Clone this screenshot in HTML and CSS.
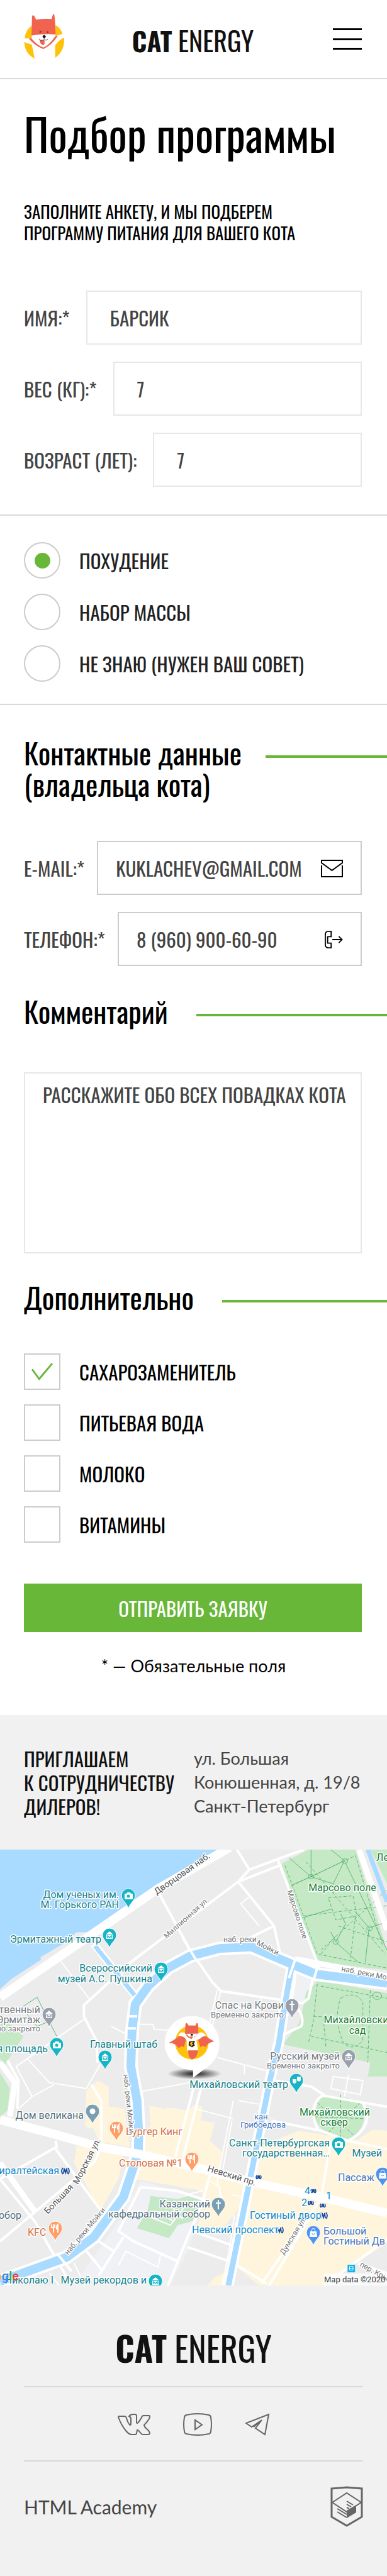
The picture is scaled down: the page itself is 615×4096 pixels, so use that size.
FILE: index.html
```html
<!DOCTYPE html>
<html lang="ru">
<head>
<meta charset="utf-8">
<meta name="viewport" content="width=device-width, initial-scale=1">
<title>Cat Energy — Подбор программы</title>
<link rel="stylesheet" href="styles.css">
</head>
<body>
<header class="header">
  <a class="header-logo" href="#" aria-label="Cat Energy">
    <svg class="cat" viewBox="28 18 206 230" aria-hidden="true">
      <path fill="#ffc20a" d="M68 80Q36 100 32 145L68 143ZM187 77Q214 93 222 122L187 132ZM30 163L68 176 82 246Q32 220 30 163ZM230 140Q236 205 186 242L185 180Q206 151 230 140Z"/>
      <path fill="#f0634f" d="M66 130L69 32Q77 18 89 50Q128 44 168 47Q172 23 179 20Q184 26 188 124Q126 120 66 130Z"/>
      <path fill="#f0634f" d="M53 145L65 143Q94 178 126 191Q160 174 186 133L199 131Q168 180 126 198Q80 180 53 145Z"/>
      <path fill="#f0634f" d="M107 152Q120 156 131 152Q136 178 123 178Q108 172 107 152Z"/>
      <ellipse cx="130" cy="135" rx="8" ry="6.500" fill="#111"/>
      <path fill="none" stroke="#222" stroke-width="2.500" d="M130 141V148M104 147Q112 160 130 150Q144 158 147 147M106 107L116 111 107 115M151 108L144 112 151 115"/>
    </svg>
  </a>
  <a class="wordmark" href="#"><b>CAT</b> ENERGY</a>
  <button class="burger" type="button" aria-label="Меню"><span></span><span></span><span></span></button>
</header>

<main>
  <section class="intro">
    <h1>Подбор программы</h1>
    <p>Заполните анкету, и мы подберем<br>программу питания для вашего кота</p>
  </section>

  <form class="form">
    <div class="fields">
      <div class="field"><label for="name">Имя:*</label><input id="name" type="text" value="БАРСИК"></div>
      <div class="field"><label for="weight">Вес (кг):*</label><input id="weight" type="text" value="7"></div>
      <div class="field"><label for="age">Возраст (лет):</label><input id="age" type="text" value="7"></div>
    </div>

    <div class="goals">
      <label class="option"><input type="radio" name="goal" checked>Похудение</label>
      <label class="option"><input type="radio" name="goal">Набор массы</label>
      <label class="option"><input type="radio" name="goal">Не знаю (нужен ваш совет)</label>
    </div>

    <h2 class="title title-contacts"><span>Контактные данные<br>(владельца кота)</span></h2>
    <div class="contacts">
      <div class="field field-mail">
        <label for="mail">E-mail:*</label>
        <div class="control">
          <input id="mail" type="email" value="KUKLACHEV@GMAIL.COM">
          <svg class="control-icon" viewBox="0 0 35 28" aria-hidden="true"><path d="M1 9V27H34V9M1 5V1H34V5L17.500 17Z"/></svg>
        </div>
      </div>
      <div class="field field-phone">
        <label for="phone">Телефон:*</label>
        <div class="control">
          <input id="phone" type="tel" value="8 (960) 900-60-90">
          <svg class="control-icon" viewBox="0 0 31 30" aria-hidden="true"><path d="M11 1H6Q1 1 1 7V23Q1 29 6 29H11V21H5V10H11ZM13 15H29M24 9.500L29.500 15 24 20.500"/></svg>
        </div>
      </div>
    </div>

    <h2 class="title"><label for="comment">Комментарий</label></h2>
    <textarea class="comment" id="comment" placeholder="РАССКАЖИТЕ ОБО ВСЕХ ПОВАДКАХ КОТА"></textarea>

    <h2 class="title title-extra"><span>Дополнительно</span></h2>
    <div class="extras">
      <label class="option"><input type="checkbox" checked>Сахарозаменитель</label>
      <label class="option"><input type="checkbox">Питьевая вода</label>
      <label class="option"><input type="checkbox">Молоко</label>
      <label class="option"><input type="checkbox">Витамины</label>
    </div>

    <button class="submit" type="submit">Отправить заявку</button>
    <p class="note">* — Обязательные поля</p>
  </form>
</main>

<section class="dealers">
  <h2>Приглашаем<br>к сотрудничеству<br>дилеров!</h2>
  <address>ул. Большая<br>Конюшенная, д. 19/8<br>Санкт-Петербург</address>
</section>

<svg class="map" viewBox="0 0 615 693" role="img" aria-label="Карта проезда">
  <defs>
    <radialGradient id="shade"><stop offset="0" stop-color="#000" stop-opacity=".9"/><stop offset="1" stop-color="#000" stop-opacity="0"/></radialGradient>
    <path id="drop" d="M0 0C-2 -9 -11 -13 -11 -21A11 11 0 0 1 11 -21C11 -13 2 -9 0 0Z"/>
    <path id="museum" d="M-6 -22L0 -27 6 -22ZM-5 -21H5V-15H-5Z" fill="#fff"/>
    <path id="museum-m" d="M-3 -16V-20L0 -17 3 -20V-16" fill="none" stroke-width="1.300"/>
    <g id="pin-museum"><use href="#drop" fill="#16b5c6" stroke="#fff"/><use href="#museum"/><use href="#museum-m" stroke="#16b5c6"/></g>
    <g id="pin-grey"><use href="#drop" fill="#9aa0ab" stroke="#fff"/><use href="#museum"/><use href="#museum-m" stroke="#9aa0ab"/></g>
    <g id="pin-photo"><use href="#drop" fill="#16b5c6" stroke="#fff"/><path d="M-6 -24H-3L-2 -26H3L4 -24H7V-15H-6Z" fill="#fff"/><circle cx="0" cy="-20" r="2.500" fill="#16b5c6"/></g>
    <g id="pin-food"><use href="#drop" fill="#ff9e67" stroke="#fff"/><path d="M-3 -14V-27M-6 -27V-22H-1V-27M4 -14V-27Q1 -24 2 -20H4" fill="none" stroke="#fff" stroke-width="1.800"/></g>
    <g id="cross"><path d="M0 -13V-28M-4 -23H4" stroke="#fff" stroke-width="2"/></g>
    <g id="pin-bag"><use href="#drop" fill="#4f93f0" stroke="#fff"/><path d="M-5 -23H5L6 -14H-6Z" fill="#fff"/><path d="M-2.500 -23V-25A2.500 2.500 0 0 1 2.500 -25V-23" fill="none" stroke="#fff"/><path d="M-2 -20A2 2 0 0 0 2 -20" fill="none" stroke="#4f93f0"/></g>
    <g id="metro" fill="none" stroke="#174aa5" stroke-width="1.800"><path d="M-4 -5Q-8 0 -4 5M4 -5Q8 0 4 5M-3 4L-2 -4 0 3 2 -4 3 4"/></g>
    <g id="metro-small" fill="none" stroke="#174aa5" stroke-width="1.500"><path d="M-3 -3Q-5 0 -3 3M3 -3Q5 0 3 3M-2 3L-1 -3 0 2 1 -3 2 3"/></g>
  </defs>
  <rect width="615" height="693" fill="#ececec"/>
  <g transform="scale(.3923 .3193)">
    <g fill="#fef5dc">
      <path d="M395 1150L440 1180V1280L505 1290 525 1480 400 1455 380 1390 345 1380 350 1200Z"/>
      <path d="M605 1275L665 1290 695 1285 760 1300 790 1270 820 1280 815 1350 870 1360 850 1450 900 1505 890 1610 580 1540V1430L610 1370Z"/>
      <path d="M310 1475L500 1525 480 1640 405 1800 300 1560Z"/>
      <path d="M560 1540L850 1620 1000 1670 960 1800 880 1920 800 1900 820 1700 550 1640Z"/>
      <path d="M1030 1670L1568 1820V1960L1430 2070 1310 2171H1050L960 2080Z"/>
      <path d="M1050 1480L1210 1400 1568 1470V1800L1030 1670Z"/>
      <path d="M1510 1395L1568 1400V1480L1440 1450Z"/>
      <path d="M870 2130L920 2100 930 2171H840Z"/>
    </g>
    <path fill="#f0f1f4" d="M570 1650L740 1710 830 1730 760 2000 690 2171H300L480 1850ZM1195 600L1260 650 1240 770 1180 740Z"/>
    <g fill="#c5e8c5">
      <path d="M1140 70L1250 0H1440L1568 500V600L1285 560Z"/>
      <path d="M1500 0H1568V170Z"/>
      <path d="M1290 650L1568 715V1130H1490L1500 1060 1145 970 1215 860 1240 710Z"/>
      <path d="M0 820L95 930 20 1070 0 1040Z"/>
      <path d="M0 1110L40 1190 30 1300 0 1330Z"/>
      <path d="M1290 1240Q1380 1215 1465 1260 1500 1380 1410 1450 1310 1430 1275 1340Z"/>
      <path d="M610 1725L720 1740 780 1720 820 1740 780 1850 720 1870 685 1935 555 1885 600 1790Z"/>
    </g>
    <g class="park">
      <path class="dash" d="M1155 80L1285 520 1568 590M1180 180L1440 30 1550 480M1330 240L1430 230 1445 330 1360 350ZM1230 330L1568 280M1300 500L1568 200M1240 60L1560 520M1360 430L1300 520M1440 330L1420 540M1370 380L1568 460M1285 670L1270 850 1250 960M1300 680L1568 740M1380 740Q1440 700 1470 760V950Q1430 1010 1390 960 1350 840 1380 740M1270 830L1400 840M1500 700L1490 1060M1260 930L1568 1010M1310 840L1320 980M1285 1260L1440 1430M1380 1220V1450M1460 1260L1320 1420M1275 1330L1480 1340"/>
      <path d="M1170 40L1260 135 1395 55 1568 500M1260 135V0M1260 135L1185 175M1260 135L1350 170 1350 220M1395 55L1340 0M1395 55L1350 170M1225 340L1345 295M1360 460L1400 370 1380 320M1360 460L1340 410M1360 460L1450 560M1495 390L1440 310M1495 390L1568 360M1495 390L1480 560M95 780L150 735 230 930M110 820L150 880 190 860"/>
      <circle cx="1260" cy="135" r="11"/><circle cx="1397" cy="57" r="11"/><circle cx="1497" cy="392" r="11"/><circle cx="1360" cy="460" r="11"/><circle cx="1528" cy="728" r="18"/>
    </g>
    <path fill="#a9daff" d="M0 0H890L620 200 375 410 310 412 255 470 165 535V550L45 645 0 695Z"/>
    <g class="street thin">
      <path d="M240 545L360 740M340 845L65 1080M560 870H620L625 895 700 900M770 1160L570 1205M880 1035L1090 1105M990 1070V1120M965 1250L1050 1268M790 1290L945 1340M1150 750L895 700 860 880M1058 740L1040 800 930 780M880 700L850 860M1010 235L975 270 1050 380M220 1170L130 1230 75 1290M65 1080L130 1230M110 1040L200 1160 350 1190 410 1060M945 1250L880 1650 910 1780M940 1350L895 1640M850 1650L890 1680 890 1750M940 1720L1000 1730M950 1820L930 1980 900 2171M750 1720L820 1700M480 2070L510 2000 640 2080 650 2020M300 2060L345 2171M200 2110L240 2171M1350 1130L1470 1150 1460 1220 1340 1190ZM1412 1120L1395 1230M1240 1800L1210 1880M560 950L450 880M610 1830L690 1870 760 1760M640 1800L700 1850M690 1770L740 1840"/>
    </g>
    <g class="street">
      <path d="M645 220L770 500 860 660 895 705 1150 750 1225 765 1250 740 1280 570M965 160L1110 380 1135 520M1110 380L1010 440M965 160L1140 75M1230 0L1120 50 1010 100 965 160 530 560 340 775V830L390 950 395 1060M960 0L1010 100M1125 50L1285 560 1290 590M1195 595Q1195 680 1180 750 1240 830 1220 880L1150 920 1120 1060M370 1170L410 1250V1480M790 1160L710 1530M820 1160L740 1540M410 1480L380 1560 0 1950M0 1640L230 1480 225 1450M225 1490L410 1800M0 1640L140 1850 290 2171M850 1620L820 1760 770 1900 680 2171M570 1680L480 1900 540 1950 720 2050M570 1680L720 1700 840 1750M500 1930L400 2120M350 2000L410 2090M400 1950L460 2000M780 1900L940 1970M760 1980L930 2050M1100 1350L1300 1400 1410 1450 1568 1490M1110 1150L1260 1180 1310 1220Q1240 1280 1290 1400M1310 1225L1470 1260 1568 1280M1470 1260Q1520 1380 1410 1450M1340 1450L1300 1740 1060 2160M1270 1800L1090 2171M1568 1940L1310 2171M960 2070L1080 2160M1450 2060L1568 2110M30 1050L75 1150 70 1290"/>
    </g>
    <path class="road mid" d="M1455 0L1568 400M1195 545L1568 630M0 1060L60 1160 40 1330M0 1560L140 1800"/>
    <g class="canal">
      <path class="bank slim" d="M380 470L545 725"/>
      <path class="bank" d="M1185 560L1150 800 1130 960 1095 1140 1000 1720 925 2171"/>
      <path class="bank wide" d="M1568 665L1280 620 1190 575 1020 485 890 492 770 530 680 590 600 680 548 770 535 900 530 1080 555 1250 562 1420 560 1510 500 1730 380 1930 270 2030 0 2150"/>
      <path class="water slim" d="M385 480L545 725"/>
      <path class="water" d="M1185 560L1150 800 1130 960 1095 1140 1000 1720 925 2171"/>
      <path class="water wide" d="M1568 665L1280 620 1190 575 1020 485 890 492 770 530 680 590 600 680 548 770 535 900 530 1080 555 1250 562 1420 560 1510 500 1730 380 1930 270 2030 0 2150"/>
      <path class="water slim" d="M1490 0L1568 260"/>
    </g>
    <path class="road" d="M930 -10L640 195 375 420 0 735"/>
    <path class="road" d="M0 1345L230 1420 400 1480 560 1515 850 1600 1000 1650 1300 1730 1568 1810"/>
    <path class="street" d="M740 440L800 560M1290 570L1270 650M1195 550L1170 640M515 830H555M515 890H550M230 2010L290 2100"/>
    <ellipse cx="788" cy="1116" rx="110" ry="28" fill="url(#shade)"/>
    <path fill="#fff" d="M778 828C840 828 889 890 889 965C889 1040 850 1080 820 1100L782 1137V1098C715 1098 667 1035 667 965C667 890 716 828 778 828Z"/>
    <ellipse cx="777" cy="960" rx="68" ry="85" fill="#ffc20a"/>
    <path fill="#f0634f" d="M683 963Q725 935 730 920L760 910 745 985Q735 970 725 990 710 960 683 963ZM868 955Q835 935 825 918L795 915 812 985Q822 970 832 985 840 960 868 955Z"/>
    <path fill="#fff" d="M722 928Q730 900 752 915L800 915Q822 900 835 930 825 925 812 940L796 950 803 1000 758 1002 756 950Q745 925 722 928Z"/>
    <path fill="#f0634f" d="M750 918L751 870Q756 855 764 876H792Q797 855 802 870L804 916ZM752 920Q775 965 800 918L794 918Q775 950 758 920ZM762 1000H803L795 1032 777 1045 765 1030Z"/>
    <path fill="#fff" d="M755 918H800L778 945Z"/>
    <path fill="#f0634f" d="M768 930H782L776 944Z"/>
    <path fill="#3a2e12" d="M765 955L790 952 786 968 790 975 778 985 764 975Z"/>
    <path fill="#ffc20a" d="M772 960L782 957 777 967 783 970 773 980 775 970 769 970Z"/>
    <ellipse cx="777" cy="922" rx="5" ry="4" fill="#111"/>
    <path fill="#10b3ec" d="M1408 2067H1438V2105H1408Z"/>
    <path fill="none" stroke="#fff" d="M1416 2076H1430V2094H1416ZM1416 2085H1430"/>
  </g>
  <rect x="514" y="674" width="101" height="19" fill="#fff" fill-opacity=".75"/>

  <use href="#pin-photo" x="204" y="94"/><use href="#pin-museum" x="174" y="157"/><use href="#pin-museum" x="256" y="211"/>
  <use href="#pin-grey" x="78" y="283"/><use href="#pin-photo" x="90" y="331"/><use href="#pin-museum" x="167" y="351"/>
  <g transform="translate(464 269)"><use href="#drop" fill="#9aa0ab" stroke="#fff"/><use href="#cross"/></g>
  <use href="#pin-grey" x="554" y="350"/>
  <g transform="translate(471 388)"><use href="#drop" fill="#16b5c6" stroke="#fff"/><path d="M-6 -23H0V-18Q-3 -14 -6 -18ZM1 -27H7V-21Q4 -18 1 -21Z" fill="#fff"/></g>
  <g transform="translate(147 437)"><use href="#drop" fill="#7a9fb2" stroke="#fff"/><circle cy="-21" r="4.500" fill="#fff"/></g>
  <use href="#pin-food" x="185" y="464"/><use href="#pin-food" x="305" y="513"/><use href="#pin-food" x="88" y="623"/>
  <use href="#pin-photo" x="538" y="489"/><use href="#pin-bag" x="608" y="537"/><use href="#pin-bag" x="498" y="630"/>
  <g transform="translate(347 585)"><use href="#drop" fill="#7a9fb2" stroke="#fff"/><use href="#cross"/></g>
  <use href="#pin-museum" x="247" y="707"/>
  <use href="#metro" x="104" y="511"/><use href="#metro" x="514" y="582"/><use href="#metro" x="444" y="605"/>
  <use href="#metro-small" x="411" y="521"/><use href="#metro-small" x="498" y="543"/><use href="#metro-small" x="494" y="562"/><use href="#metro-small" x="513" y="566"/>

  <g class="place teal" text-anchor="end">
    <text x="189" y="77">Дом ученых им.</text><text x="189" y="93">М. Горького РАН</text>
    <text x="161" y="148">Эрмитажный театр</text>
    <text x="242" y="194">Всероссийский</text><text x="242" y="211">музей А.С. Пушкина</text>
    <text x="76" y="322">я площадь</text><text x="250" y="315">Главный штаб</text>
    <text x="458" y="379">Михайловский театр</text>
    <text x="524" y="472">Санкт-Петербургская</text><text x="524" y="488">государственная…</text>
    <text x="607" y="488">Музей</text><text x="233" y="690">Музей рекордов и</text><text x="85" y="690">Николаю I</text>
  </g>
  <g class="place green" text-anchor="middle">
    <text x="544" y="66">Марсово поле</text><text x="566" y="276">Михайловски</text><text x="568" y="293">сад</text>
    <text x="532" y="423">Михайловский</text><text x="531" y="439">сквер</text><text x="608" y="18">Ле</text>
  </g>
  <g class="place grey" text-anchor="end">
    <text x="64" y="260">твенный</text><text x="64" y="276">Эрмитаж</text><text class="sub" x="64" y="289">но закрыто</text>
    <text x="451" y="253">Спас на Крови</text><text class="sub" x="451" y="267">Временно закрыто</text>
    <text x="540" y="334">Русский музей</text><text class="sub" x="540" y="348">Временно закрыто</text>
  </g>
  <g class="place slate" text-anchor="end">
    <text x="133" y="428">Дом великана</text><text x="34" y="587">обор</text>
    <text x="334" y="569">Казанский</text><text x="334" y="585">кафедральный собор</text>
  </g>
  <g class="place orange">
    <text x="200" y="454">Бургер Кинг</text><text x="189" y="504">Столовая №1</text><text x="44" y="614">KFC</text>
  </g>
  <g class="place blue">
    <text x="94" y="516" text-anchor="end">миралтейская</text><text x="397" y="587">Гостиный двор</text><text x="305" y="610">Невский проспект</text>
    <text x="484" y="548">4</text><text x="479" y="567">2</text><text x="518" y="556">1</text>
  </g>
  <g class="place shop">
    <text x="537" y="527">Пассаж</text><text x="514" y="612">Большой</text><text x="514" y="628">Гостиный Дв</text>
    <text class="sub" x="404" y="429">кан.</text><text class="sub" x="382" y="442">Грибоедова</text>
  </g>
  <g class="way">
    <text class="main" transform="translate(249 72) rotate(-35)">Дворцовая наб.</text>
    <text transform="translate(265 142) rotate(-42)">Миллионная ул.</text>
    <text transform="translate(456 66) rotate(72)">Марсово поле</text>
    <text transform="translate(355 147)">наб. реки</text><text transform="translate(407 151) rotate(27)">Мойки</text>
    <text transform="translate(542 193) rotate(11)">наб. реки Мой</text>
    <text transform="translate(196 358) rotate(84)">наб. реки Мойки</text>
    <text class="main" transform="translate(329 511) rotate(17)">Невский пр.</text>
    <text class="main" transform="translate(76 580) rotate(-46)">Большая</text><text class="main" transform="translate(124 533) rotate(-63)">Морская ул.</text>
    <text transform="translate(108 645) rotate(-50)">наб. реки Мойки</text>
    <text transform="translate(451 645) rotate(-58)">Думская ул.</text>
    <text transform="translate(571 662) rotate(29)">пер. Кры</text>
  </g>
  <text class="google" x="30" y="685" text-anchor="end"><tspan fill="#fbbc05">o</tspan><tspan fill="#4285f4">g</tspan><tspan fill="#34a853">l</tspan><tspan fill="#ea4335">e</tspan></text>
  <text class="credit" x="515" y="688">Map data ©2020 G</text>
</svg>

<footer class="footer">
  <a class="wordmark wordmark-large" href="#"><b>CAT</b> ENERGY</a>
  <nav class="social">
    <a href="#" aria-label="ВКонтакте"><svg width="52" height="40" viewBox="0 0 52 40"><path d="M2 7H11Q13 7 14 10Q17 20 20 21Q21 21 21 18V11Q21 8 18 7Q20 4 24 4H28Q30 4 30 7V17Q31 21 38 9Q39 6 41 6H50Q52 7 50 11Q47 16 42 21Q42 23 45 26Q51 31 51 34Q51 36 48 36H40Q38 36 36 33Q32 28 31 29L30 34Q30 36 27 36H22Q18 36 13 30Q5 20 1 8Q1 7 2 7Z"/></svg></a>
    <a href="#" aria-label="YouTube"><svg width="46" height="40" viewBox="0 0 46 40"><path d="M5 5Q23 1 41 5Q44 6 44 9Q46 20 44 31Q44 34 41 35Q23 39 5 35Q2 34 2 31Q0 20 2 9Q2 6 5 5ZM19 13V28L30 20.500Z"/></svg></a>
    <a href="#" aria-label="Telegram"><svg width="40" height="40" viewBox="0 0 40 40"><path d="M38 4L2 18 11 24 27 13 17 26 32 36ZM14 24L27 13"/></svg></a>
  </nav>
  <div class="academy">
    <a href="#">HTML Academy</a>
    <svg width="52" height="65" viewBox="0 0 52 65" aria-hidden="true"><path fill="none" stroke="#666" stroke-width="3" d="M2 4L26 2 50 4V49L26 63 2 49Z"/><path fill="none" stroke="#666" stroke-width="2" d="M3 26L26 11 49 26 26 41ZM26 24L36 30M26 29L33 33M26 34L30 36M11 36L26 45M11 41L26 50"/><path fill="#666" d="M26 39L41 30V42L26 51Z"/></svg>
  </div>
</footer>
</body>
</html>
```
FILE: styles.css
```css
* { box-sizing: border-box; }

body {
  margin: 0;
  background: #fff;
  color: #000;
  font-family: Oswald, "Roboto Condensed", Roboto, sans-serif;
  font-size: 31px;
}

h1, h2, p { margin: 0; font-weight: 400; }
a { color: inherit; text-decoration: none; }
button, input, textarea { font: inherit; color: inherit; }

/* Header */
.header {
  display: grid;
  grid-template-columns: 1fr auto 1fr;
  align-items: center;
  height: 126px;
  padding: 0 40px 10px 38px;
  border-bottom: 2px solid #d9d9d9;
}
.cat { display: block; width: 65px; height: 73px; }
.wordmark { padding-top: 14px; color: #111; font-size: 42px; line-height: 42px; white-space: nowrap; }
.burger {
  display: flex;
  flex-direction: column;
  justify-content: space-between;
  justify-self: end;
  width: 46px;
  height: 34px;
  margin-top: 10px;
  padding: 0;
  border: 0;
  background: none;
}
.burger span { height: 3px; background: #000; }

/* Intro */
.intro { padding: 46px 38px 0; }
.intro h1 { font-size: 69px; line-height: 80px; white-space: nowrap; }
.intro p { padding-top: 67px; font-size: 27px; line-height: 34px; text-transform: uppercase; }

/* Form */
.fields {
  display: grid;
  gap: 27px;
  padding: 75px 40px 44px 38px;
  border-bottom: 2px solid #d9d9d9;
}
.field { display: flex; align-items: center; gap: 26px; color: #444; }
.field label { flex: none; text-transform: uppercase; }
.field input {
  flex: 1;
  min-width: 0;
  width: 100%;
  height: 86px;
  padding: 0 36px;
  border: 2px solid #e7e7e7;
  border-radius: 0;
  background: none;
}

.option { display: flex; align-items: center; gap: 30px; color: #000; text-transform: uppercase; }
.option input {
  display: grid;
  place-items: center;
  flex: none;
  width: 58px;
  height: 58px;
  margin: 0;
  border: 2px solid #ccc;
  appearance: none;
}
.option input[type="radio"] { border-radius: 50%; }
.option input[type="radio"]:checked::before {
  width: 25px;
  height: 25px;
  border-radius: 50%;
  background: #68b738;
  content: "";
}
.option input[type="checkbox"]:checked::before {
  width: 34px;
  height: 28px;
  background: #68b738;
  clip-path: polygon(0 40%, 6% 33%, 36% 83%, 94% 0, 100% 7%, 36% 100%);
  content: "";
}
.goals {
  display: grid;
  gap: 24px;
  padding: 42px 38px 35px;
  border-bottom: 2px solid #d9d9d9;
}
.option { line-height: 46px; }
.goals .option { color: #222; }
.extras { display: grid; gap: 23px; padding: 65px 38px 0; }

.title { display: flex; gap: 45px; padding-left: 38px; font-size: 46px; line-height: 50px; }
.title::after { flex: 1; height: 4px; margin-top: 30px; background: #68b738; content: ""; }
.title-contacts { gap: 38px; padding-top: 50px; }

.contacts { display: grid; gap: 27px; padding: 66px 40px 46px 38px; }
.contacts .field { gap: 20px; }
.control { position: relative; flex: 1; }
.contacts .field input { display: block; padding: 0 60px 0 28px; border-color: #ccc; }
.control-icon {
  position: absolute;
  top: 30px;
  right: 30px;
  height: 28px;
  fill: none;
  stroke: #000;
  stroke-width: 2;
}

.comment {
  display: block;
  width: calc(100% - 78px);
  height: 288px;
  margin: 73px 40px 44px 38px;
  padding: 14px 10px 14px 28px;
  border: 2px solid #e7e7e7;
  color: #444;
  line-height: 38px;
  resize: none;
}
.comment::placeholder { color: #444; opacity: 1; }

.submit {
  display: block;
  width: calc(100% - 78px);
  height: 77px;
  margin: 65px 40px 0 38px;
  padding: 0;
  border: 0;
  background: #68b738;
  color: #fff;
  text-transform: uppercase;
}
.note { padding: 34px 0 58px; font-family: Lato, sans-serif; font-size: 27px; line-height: 40px; text-align: center; }

/* Dealers */
.dealers {
  display: grid;
  grid-template-columns: 240px 1fr;
  gap: 30px;
  padding: 50px 38px;
  background: #f1f1f1;
}
.dealers h2 { color: #111; font-size: 31px; line-height: 38px; text-transform: uppercase; white-space: nowrap; }
.dealers address { color: #444; font: 27px/38px Lato, sans-serif; }

/* Map */
.map { display: block; width: 100%; font-family: Roboto, sans-serif; }
.map path, .map circle { vector-effect: non-scaling-stroke; }
.street, .road { fill: none; stroke: #fff; stroke-width: 4px; }
.thin { stroke-width: 2px; }
.road { stroke-width: 14px; }
.mid { stroke-width: 9px; }
.bank { fill: none; stroke: #fff; stroke-width: 17px; }
.bank.slim { stroke-width: 12px; }
.bank.wide { stroke-width: 22px; }
.water { fill: none; stroke: #a9daff; stroke-width: 9px; }
.water.slim { stroke-width: 7px; }
.water.wide { stroke-width: 14px; }
.park { fill: none; stroke: #5cb975; stroke-width: 1px; }
.dash { stroke-dasharray: 5 3; }
.place, .way { font-size: 16px; stroke: #fff; stroke-width: 3px; stroke-linejoin: round; paint-order: stroke; }
.sub { font-size: 13px; }
.teal { fill: #16828c; }
.green { fill: #188038; }
.grey { fill: #777c82; }
.slate { fill: #56707d; }
.orange { fill: #d4703f; }
.blue { fill: #168bc9; }
.shop { fill: #4375bd; }
.way { fill: #777; font-size: 12px; }
.main { fill: #555; font-size: 14px; }
.google { font-size: 20px; font-weight: 500; }
.credit { fill: #444; font-size: 13px; }

/* Footer */
.footer { padding: 68px 38px 78px; background: #f1f1f1; text-align: center; }
.wordmark-large { display: block; padding: 0 0 30px; font-size: 54px; line-height: 62px; border-bottom: 2px solid #d9d9d9; }
.social {
  display: flex;
  justify-content: center;
  gap: 52px;
  padding: 39px 0 37px;
  border-bottom: 2px solid #d9d9d9;
}
.social svg { display: block; fill: none; stroke: #666; stroke-width: 2; }
.academy { display: flex; justify-content: space-between; align-items: center; padding-top: 39px; color: #444; font: 30px/44px Lato, sans-serif; }
```
